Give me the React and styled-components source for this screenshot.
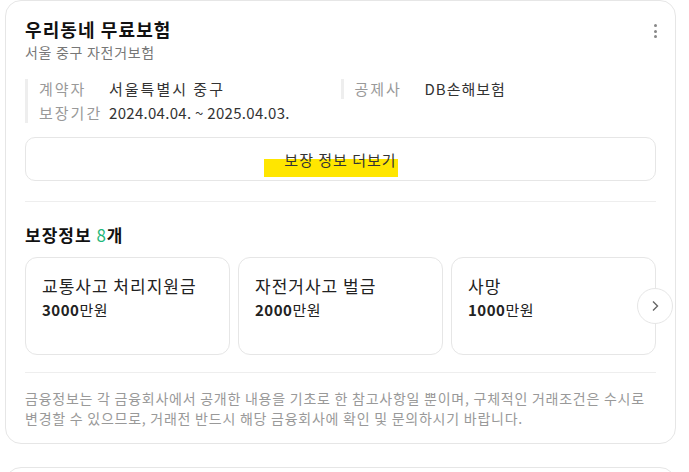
import React from 'react';
import styled, { createGlobalStyle } from 'styled-components';

const GlobalStyle = createGlobalStyle`
  * {
    box-sizing: border-box;
  }
  body {
    margin: 0;
    background: #fff;
    font-family: 'Noto Sans CJK KR', 'Noto Sans', sans-serif;
    color: #222;
  }
`;

const Page = styled.div`
  padding: 0 13px 0 5px;
  display: flex;
  flex-direction: column;
  gap: 23px;
`;

const Card = styled.section`
  border: 1px solid #e6e6e6;
  border-radius: 16px;
  padding: 15px 19px 15px 19px;
  background: #fff;
  min-height: ${(props) => props.$minHeight || 'auto'};
`;

const Header = styled.div`
  display: flex;
  justify-content: space-between;
  align-items: flex-start;

  h2 {
    margin: 0;
    font-size: 18px;
    line-height: 26px;
    font-weight: 700;
    letter-spacing: 1.1px;
    color: #111;
  }
  p {
    margin: 0;
    font-size: 14px;
    line-height: 20px;
    letter-spacing: 0.7px;
    color: #777;
  }
`;

const Kebab = styled.button`
  border: 0;
  background: none;
  padding: 0;
  margin: 8px -4px 0 0;
  width: 10px;
  display: flex;
  flex-direction: column;
  align-items: center;
  gap: 2.5px;

  span {
    width: 3px;
    height: 3px;
    border-radius: 50%;
    background: #888;
  }
`;

const InfoGrid = styled.div`
  display: grid;
  grid-template-columns: 1fr 1fr;
  margin-top: 17px;
`;

const InfoColumn = styled.dl`
  margin: 0;
  border-left: 3px solid #eee;
  padding-left: 11px;
  display: flex;
  flex-direction: column;
  gap: 4px;
  align-self: start;
`;

const InfoRow = styled.div`
  display: flex;
  font-size: 15px;
  line-height: 20px;
`;

const InfoLabel = styled.dt`
  width: 70px;
  color: #999;
  letter-spacing: 2px;
`;

const InfoValue = styled.dd`
  margin: 0;
  color: #333;
  letter-spacing: ${(props) => props.$spacing || '1px'};
`;

const MoreButton = styled.button`
  position: relative;
  display: block;
  width: 100%;
  height: 44px;
  margin-top: 14px;
  border: 1px solid #e6e6e6;
  border-radius: 10px;
  background: #fff;
  font-family: inherit;
  font-size: 15px;
  letter-spacing: 1px;
  color: #333;

  span {
    position: relative;
    z-index: 1;
  }
`;

const Highlight = styled.i`
  position: absolute;
  left: 238px;
  top: 21px;
  width: 134px;
  height: 18px;
  background: #ffe600;
`;

const Divider = styled.hr`
  border: 0;
  border-top: 1px solid #eee;
  margin: ${(props) => props.$margin};
`;

const SectionTitle = styled.h3`
  margin: 0;
  font-size: 17px;
  line-height: 24px;
  font-weight: 700;
  letter-spacing: 1px;
  color: #111;

  em {
    font-style: normal;
    font-weight: 400;
    color: #1fb87a;
  }
`;

const Carousel = styled.div`
  position: relative;
  margin-top: 10px;
`;

const Track = styled.div`
  display: grid;
  grid-template-columns: repeat(3, 1fr);
  gap: 8px;
`;

const CoverCard = styled.div`
  height: 98px;
  border: 1px solid #e6e6e6;
  border-radius: 12px;
  padding: 16px 16px;

  strong {
    display: block;
    font-size: 17px;
    line-height: 24px;
    font-weight: 400;
    letter-spacing: 1px;
    color: #222;
  }
  div {
    font-size: 15px;
    line-height: 24px;
    letter-spacing: 0.5px;
    color: #222;
  }
  b {
    font-weight: 700;
  }
`;

const NextButton = styled.button`
  position: absolute;
  right: -17px;
  top: 31px;
  width: 36px;
  height: 36px;
  border-radius: 50%;
  border: 1px solid #e6e6e6;
  background: #fff;
  display: flex;
  align-items: center;
  justify-content: center;
  padding: 0;
`;

const Notice = styled.p`
  margin: 0;
  font-size: 14px;
  line-height: 20px;
  color: #999;
  letter-spacing: 0.75px;
`;

const coverages = [
  { name: '교통사고 처리지원금', amount: '3000' },
  { name: '자전거사고 벌금', amount: '2000' },
  { name: '사망', amount: '1000' },
];

const App = () => {
  return (
    <Page>
      <GlobalStyle />
      <Card>
        <Header>
          <div>
            <h2>우리동네 무료보험</h2>
            <p>서울 중구 자전거보험</p>
          </div>
          <Kebab aria-label='더보기'>
            <span />
            <span />
            <span />
          </Kebab>
        </Header>

        <InfoGrid>
          <InfoColumn>
            <InfoRow>
              <InfoLabel>계약자</InfoLabel>
              <InfoValue $spacing='2px'>서울특별시 중구</InfoValue>
            </InfoRow>
            <InfoRow>
              <InfoLabel>보장기간</InfoLabel>
              <InfoValue $spacing='0.3px'>2024.04.04. ~ 2025.04.03.</InfoValue>
            </InfoRow>
          </InfoColumn>
          <InfoColumn>
            <InfoRow>
              <InfoLabel>공제사</InfoLabel>
              <InfoValue>DB손해보험</InfoValue>
            </InfoRow>
          </InfoColumn>
        </InfoGrid>

        <MoreButton>
          <Highlight />
          <span>보장 정보 더보기</span>
        </MoreButton>

        <Divider $margin='20px 0 21px' />

        <SectionTitle>
          보장정보 <em>8</em>개
        </SectionTitle>

        <Carousel>
          <Track>
            {coverages.map((c) => (
              <CoverCard key={c.name}>
                <strong>{c.name}</strong>
                <div>
                  <b>{c.amount}</b>만원
                </div>
              </CoverCard>
            ))}
          </Track>
          <NextButton aria-label='다음'>
            <svg width='14' height='14' viewBox='0 0 14 14'>
              <path
                d='M5 2.5 L9.5 7 L5 11.5'
                fill='none'
                stroke='#666'
                strokeWidth='1.4'
              />
            </svg>
          </NextButton>
        </Carousel>

        <Divider $margin='17px 0 15px' />

        <Notice>
          금융정보는 각 금융회사에서 공개한 내용을 기초로 한 참고사항일 뿐이며, 구체적인 거래조건은 수시로 변경할 수 있으므로, 거래전 반드시 해당 금융회사에 확인 및 문의하시기 바랍니다.
        </Notice>
      </Card>
      <Card $minHeight='60px' />
    </Page>
  );
};

export default App;
